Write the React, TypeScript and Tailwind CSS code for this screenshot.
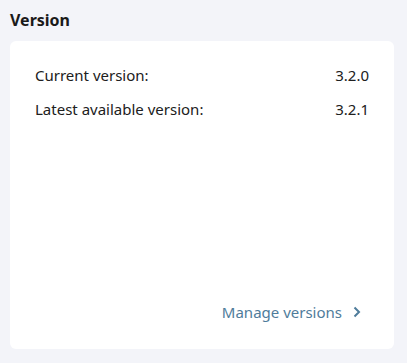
export default function App() {
  return (
    <div className="w-[407px] h-[363px] bg-[#f3f4f9] px-[10px] pt-[8px] font-['Noto_Sans',sans-serif] text-[#202020]">
      <h2 className="text-[16px] font-bold leading-[24px] text-[#1a1a1a]">Version</h2>

      <div className="mt-[9px] w-[384px] h-[308px] bg-white rounded-[6px] px-[25px] pt-[24px] pb-[27px] flex flex-col">
        <div className="flex flex-col gap-[14px] text-[15px] leading-[20px]">
          <div className="flex justify-between">
            <span>Current version:</span>
            <span>3.2.0</span>
          </div>
          <div className="flex justify-between">
            <span>Latest available version:</span>
            <span>3.2.1</span>
          </div>
        </div>

        <div className="mt-auto flex justify-end pr-[8px]">
          <a href="#" className="flex items-center gap-[11px] text-[15px] leading-[20px] text-[#4f7c9b]">
            Manage versions
            <svg width="8" height="12" viewBox="0 0 8 12" fill="none">
              <path d="M1.5 1.5 6 6l-4.5 4.5" stroke="currentColor" strokeWidth="2" />
            </svg>
          </a>
        </div>
      </div>
    </div>
  );
}
